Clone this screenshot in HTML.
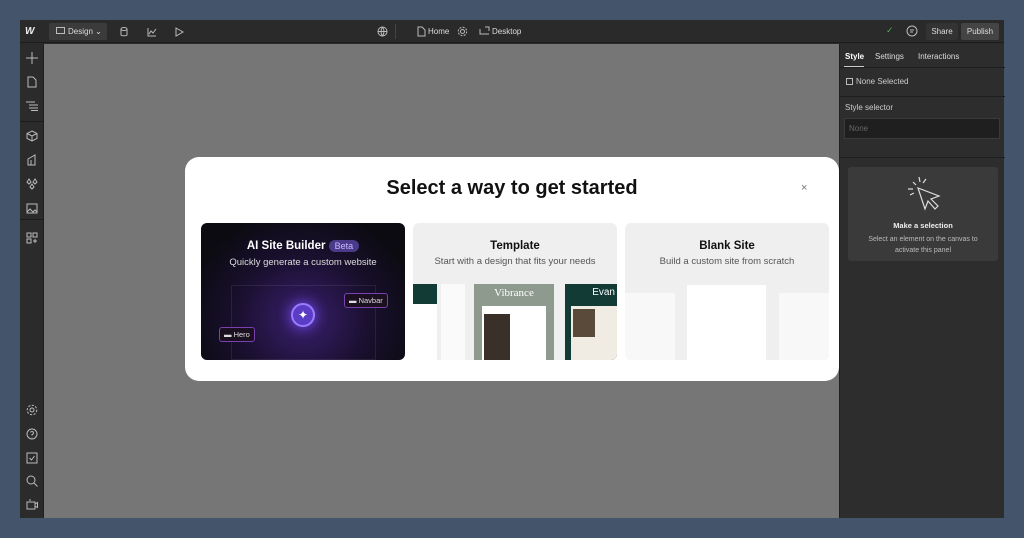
<!DOCTYPE html>
<html><head><meta charset="utf-8"><style>
*{margin:0;padding:0;box-sizing:border-box}
body{width:1024px;height:538px;background:#44546b;font-family:"Liberation Sans",sans-serif;position:relative;overflow:hidden}
.abs{position:absolute}
.app{left:20px;top:20px;width:984px;height:498px;background:#2b2b2b}
.top{left:20px;top:20px;width:984px;height:23px;background:#2a2a2a;border-bottom:1px solid #1c1c1c;color:#ddd;font-size:8px}
.side{left:20px;top:44px;width:24px;height:474px;background:#2b2b2b;border-right:1px solid #1e1e1e}
.canvas{left:44px;top:44px;width:795px;height:474px;background:#767676}
.panel{left:839px;top:44px;width:165px;height:474px;background:#2d2d2d;border-left:1px solid #1f1f1f;color:#ddd;font-size:8px}
svg{display:block}
.ic{position:absolute;stroke:#bbb;fill:none;stroke-width:1}
.modal{left:185px;top:157px;width:654px;height:224px;background:#fff;border-radius:14px}
.card{position:absolute;top:66px;width:204px;height:137px;border-radius:6px;overflow:hidden;text-align:center}
.h{font-weight:bold;font-size:11.5px;color:#111}
.s{font-size:9.5px;color:#555;margin-top:4px}
</style></head><body>
<div class="abs app"></div>
<div class="abs top">
 <div class="abs" style="left:5px;top:6px;font-weight:bold;font-size:10px;color:#eee;font-style:italic">W</div>
 <div class="abs" style="left:29px;top:3px;width:58px;height:17px;background:#3b3b3b;border-radius:2px"></div>
 <svg class="ic" style="left:36px;top:7px" width="10" height="9"><rect x="0.5" y="0.5" width="8" height="6"/></svg>
 <div class="abs" style="left:48px;top:7px">Design ⌄</div>
 <svg class="ic" style="left:100px;top:7px" width="8" height="10"><ellipse cx="4" cy="2" rx="3" ry="1.5"/><path d="M1 2v6c0 1 6 1 6 0V2"/></svg>
 <svg class="ic" style="left:127px;top:7px" width="10" height="10"><path d="M1 1v8h8M2 7l2-3 2 2 3-4"/></svg>
 <svg class="ic" style="left:155px;top:7px" width="9" height="10"><path d="M1 1l7 4-7 4z"/></svg>
 <svg class="ic" style="left:357px;top:6px" width="11" height="11"><circle cx="5.5" cy="5.5" r="4.5"/><path d="M1 5.5h9M5.5 1c-2 3-2 6 0 9c2-3 2-6 0-9"/></svg>
 <div class="abs" style="left:375px;top:4px;width:1px;height:15px;background:#444"></div>
 <svg class="ic" style="left:397px;top:6px" width="9" height="11"><path d="M1 1h4l3 3v6H1z"/></svg>
 <div class="abs" style="left:408px;top:7px">Home</div>
 <svg class="ic" style="left:437px;top:6px" width="11" height="11"><circle cx="5.5" cy="5.5" r="2"/><circle cx="5.5" cy="5.5" r="4.2" stroke-dasharray="2 1.3"/></svg>
 <svg class="ic" style="left:459px;top:6px" width="11" height="10"><path d="M1 3v5h9M6 1h4v4"/></svg>
 <div class="abs" style="left:472px;top:7px">Desktop</div>
 <div class="abs" style="left:866px;top:5px;color:#4caf50;font-size:9px">✓</div>
 <svg class="ic" style="left:886px;top:5px" width="12" height="12"><circle cx="6" cy="6" r="5"/><path d="M4 5h4M4 7h3"/></svg>
 <div class="abs" style="left:906px;top:3px;width:32px;height:17px;background:#333;border-radius:2px;text-align:center;line-height:17px">Share</div>
 <div class="abs" style="left:941px;top:3px;width:38px;height:17px;background:#444;border-radius:2px;text-align:center;line-height:17px">Publish</div>
</div>
<div class="abs side">
 <svg class="ic" style="left:6px;top:8px" width="12" height="12"><path d="M6 0v12M0 6h12"/></svg>
 <svg class="ic" style="left:7px;top:32px" width="10" height="12"><path d="M1 1h5l3 3v7H1z"/></svg>
 <svg class="ic" style="left:6px;top:57px" width="12" height="10"><path d="M0 1h9M3 4h9M3 7h9M5 9.5h7"/></svg>
 <div class="abs" style="left:0;top:77px;width:24px;height:1px;background:#1c1c1c"></div>
 <svg class="ic" style="left:6px;top:86px" width="12" height="12"><path d="M6 1l5 2.5v5L6 11 1 8.5v-5zM1 3.5L6 6l5-2.5M6 6v5"/></svg>
 <svg class="ic" style="left:6px;top:110px" width="12" height="12"><path d="M2 11V5l7-4v10zM5 11V6"/></svg>
 <svg class="ic" style="left:6px;top:134px" width="12" height="12"><path d="M3 1l2 3-2 2-2-2zM9 1l2 3-2 2-2-2zM6 6l2 3-2 2-2-2z"/></svg>
 <svg class="ic" style="left:6px;top:158px" width="12" height="12"><rect x="1" y="2" width="10" height="9"/><path d="M1 10l3-3 3 3 2-2 2 2"/></svg>
 <div class="abs" style="left:0;top:175px;width:24px;height:1px;background:#1c1c1c"></div>
 <svg class="ic" style="left:6px;top:188px" width="12" height="12"><rect x="1" y="1" width="4" height="4"/><rect x="7" y="1" width="4" height="4"/><rect x="1" y="7" width="4" height="4"/><path d="M9 7v4M7 9h4"/></svg>
 <svg class="ic" style="left:6px;top:360px" width="12" height="12"><circle cx="6" cy="6" r="2"/><circle cx="6" cy="6" r="4.8" stroke-dasharray="2.2 1.5"/></svg>
 <svg class="ic" style="left:6px;top:384px" width="12" height="12"><circle cx="6" cy="6" r="5"/><path d="M4.5 4.5a1.5 1.5 0 1 1 1.5 2v1M6 9v.5"/></svg>
 <svg class="ic" style="left:6px;top:408px" width="12" height="12"><rect x="1" y="1" width="10" height="10"/><path d="M3.5 6l2 2 3-4"/></svg>
 <svg class="ic" style="left:6px;top:431px" width="12" height="12"><circle cx="5" cy="5" r="4"/><path d="M8 8l3.5 3.5"/></svg>
 <svg class="ic" style="left:6px;top:455px" width="12" height="12"><rect x="1" y="3" width="8" height="7"/><path d="M9 5l2.5-1.5v5L9 7M3 1h2"/></svg>
</div>
<div class="abs canvas"></div>
<div class="abs panel">
 <div class="abs" style="left:5px;top:8px;font-weight:bold;color:#fff">Style</div>
 <div class="abs" style="left:4px;top:22px;width:20px;height:1px;background:#ccc"></div>
 <div class="abs" style="left:35px;top:8px">Settings</div>
 <div class="abs" style="left:78px;top:8px">Interactions</div>
 <div class="abs" style="left:0;top:23px;width:165px;height:1px;background:#1f1f1f"></div>
 <div class="abs" style="left:6px;top:34px;width:7px;height:7px;border:1px solid #bbb"></div>
 <div class="abs" style="left:16px;top:33px;color:#ccc">None Selected</div>
 <div class="abs" style="left:0;top:52px;width:165px;height:1px;background:#1f1f1f"></div>
 <div class="abs" style="left:5px;top:59px;color:#ccc">Style selector</div>
 <div class="abs" style="left:4px;top:74px;width:156px;height:21px;background:#1f1f1f;border:1px solid #3a3a3a;color:#666;padding:5px 4px">None</div>
 <div class="abs" style="left:0;top:113px;width:165px;height:1px;background:#1f1f1f"></div>
 <div class="abs" style="left:8px;top:123px;width:150px;height:94px;background:#3a3a3a;border-radius:3px;text-align:center">
  <svg style="position:absolute;left:55px;top:7px" width="38" height="40" fill="none" stroke="#ddd" stroke-width="1.2"><path d="M15 14l7 21 3-8 7 8 3-3-7-7 8-3z"/><path d="M13 11l-3-3M17 8l-1-5M20 9l3-4M10 15H5M11 19l-4 2"/></svg>
  <div style="position:absolute;top:54px;width:100%;font-weight:bold;color:#eee;font-size:7.5px">Make a selection</div>
  <div style="position:absolute;top:67px;width:100%;color:#bbb;font-size:7px;line-height:11px">Select an element on the canvas to<br>activate this panel</div>
 </div>
</div>
<div class="abs modal">
 <div class="abs" style="left:0;top:20px;width:654px;text-align:center;font-size:20px;font-weight:bold;color:#111">Select a way to get started</div>
 <div class="abs" style="left:616px;top:25px;font-size:11px;color:#777">×</div>
 <div class="card" style="left:16px;background:radial-gradient(ellipse at 50% 70%,#3a1f6e 0%,#1a1030 45%,#0c0b12 80%)">
  <div style="position:absolute;left:30px;top:62px;width:145px;height:75px;border:1px solid rgba(255,255,255,.08)"></div>
  <div style="margin-top:17px;color:#fff;font-weight:bold;font-size:11.5px">AI Site Builder <span style="background:#4a3a8a;color:#c9b8ff;border-radius:8px;padding:1px 6px;font-weight:normal;font-size:9px">Beta</span></div>
  <div style="color:#ddd;font-size:9.5px;margin-top:5px">Quickly generate a custom website</div>
  <div style="position:absolute;left:90px;top:80px;width:24px;height:24px;border-radius:50%;background:#5b3cc4;box-shadow:0 0 14px #7a4dff;border:2px solid #9a7dff;color:#fff;font-size:12px;line-height:20px">✦</div>
  <div style="position:absolute;left:143px;top:70px;border:1px solid #7a3fb0;border-radius:3px;color:#ddd;font-size:7.5px;padding:2px 4px;background:#1a1020">▬ Navbar</div>
  <div style="position:absolute;left:18px;top:104px;border:1px solid #7a3fb0;border-radius:3px;color:#ddd;font-size:7.5px;padding:2px 4px;background:#1a1020">▬ Hero</div>
 </div>
 <div class="card" style="left:228px;background:#efefef">
  <div class="h" style="margin-top:17px">Template</div><div class="s">Start with a design that fits your needs</div>
  <div style="position:absolute;left:0;top:61px;width:24px;height:76px;background:#fff"><div style="height:20px;background:#123b35"></div></div>
  <div style="position:absolute;left:28px;top:61px;width:24px;height:76px;background:#fafafa"></div>
  <div style="position:absolute;left:61px;top:61px;width:80px;height:76px;background:#8d9a8d"><div style="color:#fff;font-family:'Liberation Serif',serif;font-size:11px;margin-top:3px">Vibrance</div><div style="position:absolute;left:8px;top:22px;width:64px;height:54px;background:#fff"></div><div style="position:absolute;left:10px;top:30px;width:26px;height:46px;background:#3a302a"></div></div>
  <div style="position:absolute;left:152px;top:61px;width:52px;height:76px;background:#123b35"><div style="color:#fff;font-size:10px;text-align:right;padding:3px 2px 0 0">Evan</div><div style="position:absolute;left:6px;top:22px;width:46px;height:54px;background:#f0ece4"></div><div style="position:absolute;left:8px;top:25px;width:22px;height:28px;background:#5a4a3a"></div></div>
 </div>
 <div class="card" style="left:440px;background:#efefef">
  <div class="h" style="margin-top:17px">Blank Site</div><div class="s">Build a custom site from scratch</div>
  <div style="position:absolute;left:0;top:70px;width:50px;height:67px;background:#f8f8f8"></div>
  <div style="position:absolute;left:62px;top:62px;width:79px;height:75px;background:#fff"></div>
  <div style="position:absolute;left:154px;top:70px;width:50px;height:67px;background:#f8f8f8"></div>
 </div>
</div>
</body></html>
